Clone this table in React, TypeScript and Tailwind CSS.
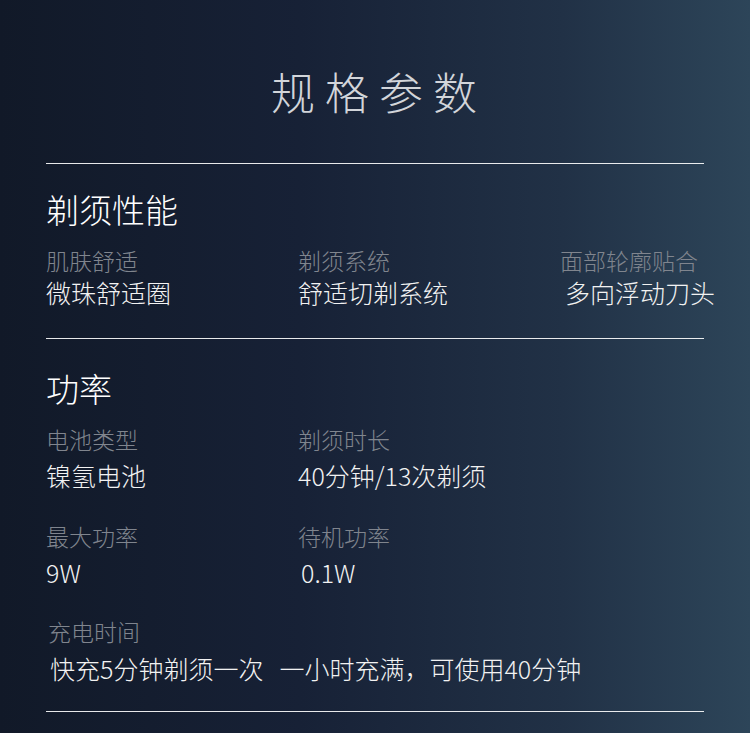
const font = {
  fontFamily: '"Noto Sans CJK SC", "Noto Sans", sans-serif',
};

type Item = { label: string; value: React.ReactNode; vx?: string; gap?: string };

function Cell({ label, value, vx, gap }: Item) {
  return (
    <div className="whitespace-nowrap">
      <div className="text-[23px] leading-[28px] text-[#80858e] font-light">{label}</div>
      <div className={`${gap ?? 'mt-[7px]'} text-[25px] leading-[30px] text-[#f2f2f2] font-light ${vx ?? ''}`}>
        {value}
      </div>
    </div>
  );
}

export default function App() {
  return (
    <div
      className="w-[750px] h-[733px] overflow-hidden bg-[linear-gradient(90deg,#111928_0%,#172136_40%,#213146_75%,#2d4559_100%)]"
      style={font}
    >
      <div className="px-[46px]">
        <h1 className="pt-[65px] pl-[8px] text-center text-[44px] leading-[52px] tracking-[10px] text-[#d2d5da] font-light">
          规格参数
        </h1>
        <div className="mt-[46px] h-px w-[658px] bg-white/90" />

        <h2 className="mt-[25px] text-[33px] leading-[40px] text-white font-light">剃须性能</h2>
        <div className="mt-[17px] flex">
          <div className="w-[252px] shrink-0">
            <Cell label="肌肤舒适" value="微珠舒适圈" gap="mt-[3px]" />
          </div>
          <div className="w-[262px] shrink-0">
            <Cell label="剃须系统" value="舒适切剃系统" gap="mt-[3px]" />
          </div>
          <div className="shrink-0">
            <Cell label="面部轮廓贴合" value="多向浮动刀头" vx="ml-[5px]" gap="mt-[3px]" />
          </div>
        </div>
        <div className="mt-[31px] h-px w-[658px] bg-white/90" />

        <h2 className="mt-[29px] text-[33px] leading-[40px] text-white font-light">功率</h2>
        <div className="mt-[17px] flex">
          <div className="w-[252px] shrink-0">
            <Cell label="电池类型" value="镍氢电池" />
          </div>
          <div className="shrink-0">
            <Cell label="剃须时长" value="40分钟/13次剃须" />
          </div>
        </div>
        <div className="mt-[32px] flex">
          <div className="w-[252px] shrink-0">
            <Cell label="最大功率" value="9W" />
          </div>
          <div className="shrink-0">
            <Cell label="待机功率" value="0.1W" vx="ml-[3px]" />
          </div>
        </div>
        <div className="mt-[30px] ml-[2px]">
          <Cell
            label="充电时间"
            gap="mt-[8px]"
            vx="ml-[2px]"
            value={
              <>
                快充5分钟剃须一次
                <span className="inline-block w-[16px]" />
                一小时充满，可使用40分钟
              </>
            }
          />
        </div>
        <div className="mt-[28px] h-px w-[658px] bg-white/90" />
      </div>
    </div>
  );
}
